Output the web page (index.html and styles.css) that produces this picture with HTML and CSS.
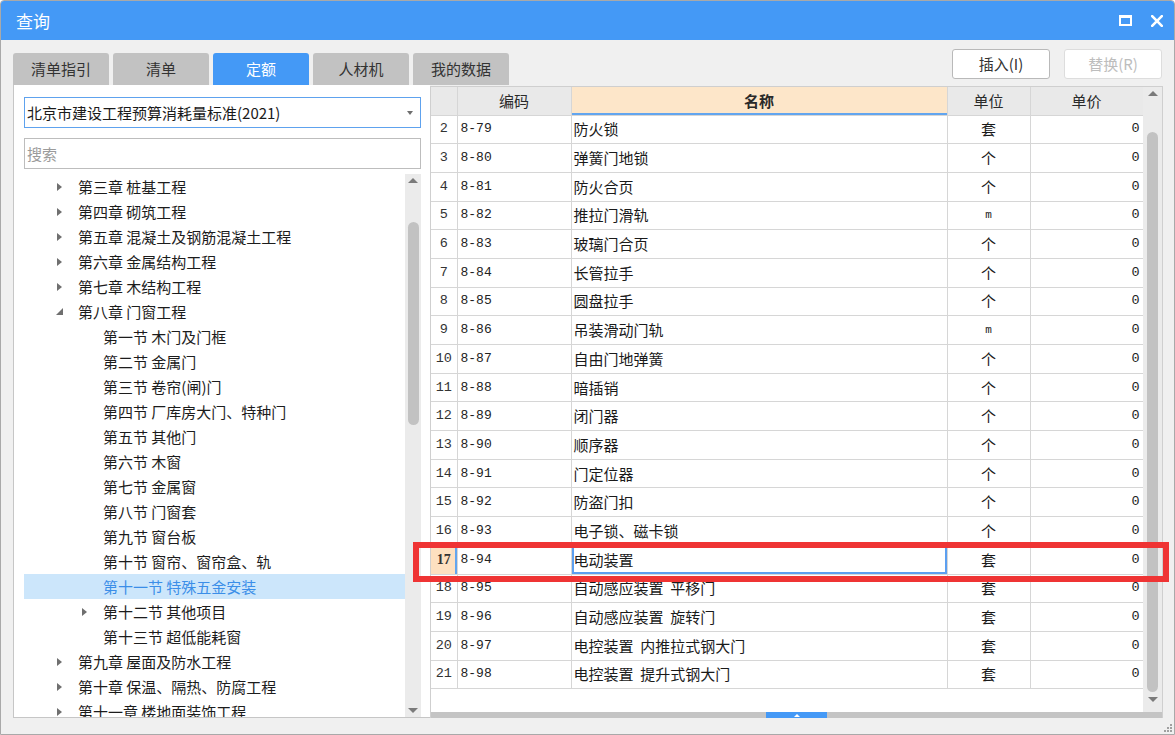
FILE: index.html
```html
<!DOCTYPE html>
<html lang="zh-CN">
<head>
<meta charset="utf-8">
<title>查询</title>
<link rel="stylesheet" href="styles.css">
</head>
<body>
<div class="window">
  <div class="titlebar">
    <span class="title">查询</span>
    <div class="tb-icons">
      <svg class="ic-max" width="13" height="11" viewBox="0 0 13 11"><rect x="1" y="1.5" width="11" height="8.5" fill="none" stroke="#fff" stroke-width="2"/><rect x="0" y="0" width="13" height="3" fill="#fff"/></svg>
      <svg class="ic-close" width="12" height="12" viewBox="0 0 12 12"><path d="M1.2 1.2 L10.8 10.8 M10.8 1.2 L1.2 10.8" stroke="#fff" stroke-width="2.6" stroke-linecap="square"/></svg>
    </div>
  </div>

  <div class="toprow">
    <div class="tabs">
      <div class="tab">清单指引</div>
      <div class="tab">清单</div>
      <div class="tab active">定额</div>
      <div class="tab">人材机</div>
      <div class="tab">我的数据</div>
    </div>
    <div class="buttons">
      <div class="btn">插入(I)</div>
      <div class="btn disabled">替换(R)</div>
    </div>
  </div>

  <div class="main">
    <div class="left">
      <div class="combo"><span>北京市建设工程预算消耗量标准(2021)</span><span class="caret"></span></div>
      <div class="search">搜索</div>
      <div class="tree">
        <div class="tree-list">
          <div class="node ch"><span class="tri"><i class="t-right"></i></span>第三章 桩基工程</div>
          <div class="node ch"><span class="tri"><i class="t-right"></i></span>第四章 砌筑工程</div>
          <div class="node ch"><span class="tri"><i class="t-right"></i></span>第五章 混凝土及钢筋混凝土工程</div>
          <div class="node ch"><span class="tri"><i class="t-right"></i></span>第六章 金属结构工程</div>
          <div class="node ch"><span class="tri"><i class="t-right"></i></span>第七章 木结构工程</div>
          <div class="node ch"><span class="tri"><svg class="t-open" width="7" height="7" viewBox="0 0 7 7"><path d="M7 0 L7 7 L0 7 Z" fill="#6f6f6f"/></svg></span>第八章 门窗工程</div>
          <div class="node sec"><span class="tri"></span>第一节 木门及门框</div>
          <div class="node sec"><span class="tri"></span>第二节 金属门</div>
          <div class="node sec"><span class="tri"></span>第三节 卷帘(闸)门</div>
          <div class="node sec"><span class="tri"></span>第四节 厂库房大门、特种门</div>
          <div class="node sec"><span class="tri"></span>第五节 其他门</div>
          <div class="node sec"><span class="tri"></span>第六节 木窗</div>
          <div class="node sec"><span class="tri"></span>第七节 金属窗</div>
          <div class="node sec"><span class="tri"></span>第八节 门窗套</div>
          <div class="node sec"><span class="tri"></span>第九节 窗台板</div>
          <div class="node sec"><span class="tri"></span>第十节 窗帘、窗帘盒、轨</div>
          <div class="node sec selected"><span class="tri"></span>第十一节 特殊五金安装</div>
          <div class="node sec"><span class="tri"><i class="t-right"></i></span>第十二节 其他项目</div>
          <div class="node sec"><span class="tri"></span>第十三节 超低能耗窗</div>
          <div class="node ch"><span class="tri"><i class="t-right"></i></span>第九章 屋面及防水工程</div>
          <div class="node ch"><span class="tri"><i class="t-right"></i></span>第十章 保温、隔热、防腐工程</div>
          <div class="node ch"><span class="tri"><i class="t-right"></i></span>第十一章 楼地面装饰工程</div>
        </div>
        <div class="vscroll small">
          <span class="arr-up"></span>
          <span class="thumb"></span>
          <span class="spacer"></span>
          <span class="arr-down"></span>
        </div>
      </div>
    </div>

    <div class="right">
      <div class="grid-area">
        <div class="table-wrap">
          <table class="grid">
            <colgroup>
              <col class="c-no"><col class="c-code"><col class="c-name"><col class="c-unit"><col class="c-price">
            </colgroup>
            <thead>
              <tr><th class="no"></th><th>编码</th><th class="name-h">名称</th><th>单位</th><th>单价</th></tr>
            </thead>
            <tbody>
              <tr><td class="no">2</td><td class="code">8-79</td><td class="name">防火锁</td><td class="unit">套</td><td class="price">0</td></tr>
              <tr><td class="no">3</td><td class="code">8-80</td><td class="name">弹簧门地锁</td><td class="unit">个</td><td class="price">0</td></tr>
              <tr><td class="no">4</td><td class="code">8-81</td><td class="name">防火合页</td><td class="unit">个</td><td class="price">0</td></tr>
              <tr><td class="no">5</td><td class="code">8-82</td><td class="name">推拉门滑轨</td><td class="unit m">m</td><td class="price">0</td></tr>
              <tr><td class="no">6</td><td class="code">8-83</td><td class="name">玻璃门合页</td><td class="unit">个</td><td class="price">0</td></tr>
              <tr><td class="no">7</td><td class="code">8-84</td><td class="name">长管拉手</td><td class="unit">个</td><td class="price">0</td></tr>
              <tr><td class="no">8</td><td class="code">8-85</td><td class="name">圆盘拉手</td><td class="unit">个</td><td class="price">0</td></tr>
              <tr><td class="no">9</td><td class="code">8-86</td><td class="name">吊装滑动门轨</td><td class="unit m">m</td><td class="price">0</td></tr>
              <tr><td class="no">10</td><td class="code">8-87</td><td class="name">自由门地弹簧</td><td class="unit">个</td><td class="price">0</td></tr>
              <tr><td class="no">11</td><td class="code">8-88</td><td class="name">暗插销</td><td class="unit">个</td><td class="price">0</td></tr>
              <tr><td class="no">12</td><td class="code">8-89</td><td class="name">闭门器</td><td class="unit">个</td><td class="price">0</td></tr>
              <tr><td class="no">13</td><td class="code">8-90</td><td class="name">顺序器</td><td class="unit">个</td><td class="price">0</td></tr>
              <tr><td class="no">14</td><td class="code">8-91</td><td class="name">门定位器</td><td class="unit">个</td><td class="price">0</td></tr>
              <tr><td class="no">15</td><td class="code">8-92</td><td class="name">防盗门扣</td><td class="unit">个</td><td class="price">0</td></tr>
              <tr><td class="no">16</td><td class="code">8-93</td><td class="name">电子锁、磁卡锁</td><td class="unit">个</td><td class="price">0</td></tr>
              <tr class="cur"><td class="no">17</td><td class="code">8-94</td><td class="name sel">电动装置</td><td class="unit">套</td><td class="price">0</td></tr>
              <tr><td class="no">18</td><td class="code">8-95</td><td class="name">自动感应装置&nbsp; 平移门</td><td class="unit">套</td><td class="price">0</td></tr>
              <tr><td class="no">19</td><td class="code">8-96</td><td class="name">自动感应装置&nbsp; 旋转门</td><td class="unit">套</td><td class="price">0</td></tr>
              <tr><td class="no">20</td><td class="code">8-97</td><td class="name">电控装置&nbsp; 内推拉式钢大门</td><td class="unit">套</td><td class="price">0</td></tr>
              <tr><td class="no">21</td><td class="code">8-98</td><td class="name">电控装置&nbsp; 提升式钢大门</td><td class="unit">套</td><td class="price">0</td></tr>
            </tbody>
          </table>
        </div>
        <div class="vscroll big">
          <span class="arr-up"></span>
          <span class="thumb"></span>
          <span class="spacer"></span>
          <span class="arr-down"></span>
        </div>
      </div>
      <div class="splitter"><span class="handle"><i class="h-up"></i></span></div>
    </div>
  </div>

  <div class="redbox"></div>
  <svg class="grip" width="10" height="10" viewBox="0 0 10 10">
    <rect x="8" y="2" width="2" height="2" fill="#a0a0a0"/>
    <rect x="5" y="5" width="2" height="2" fill="#a0a0a0"/><rect x="8" y="5" width="2" height="2" fill="#a0a0a0"/>
    <rect x="2" y="8" width="2" height="2" fill="#a0a0a0"/><rect x="5" y="8" width="2" height="2" fill="#a0a0a0"/><rect x="8" y="8" width="2" height="2" fill="#a0a0a0"/>
  </svg>
</div>
</body>
</html>
```

FILE: styles.css
```css
* { box-sizing: border-box; }
html, body { margin: 0; padding: 0; background: #ffffff; }
body {
  font-family: "Noto Sans CJK SC", "Microsoft YaHei", sans-serif;
  font-size: 15px;
  color: #1e1e1e;
}

.window {
  position: relative;
  width: 1175px;
  height: 735px;
  border: 1px solid #a9a9a9;
  border-radius: 4px 4px 0 0;
  background: #f0f0f0;
  display: flex;
  flex-direction: column;
  overflow: hidden;
}

/* title bar */
.titlebar {
  height: 39px;
  flex: none;
  background: #4499f6;
  color: #fff;
  display: flex;
  align-items: center;
  justify-content: space-between;
  padding: 0 11px 0 15px;
}
.title { font-size: 17px; line-height: 39px; }
.tb-icons { display: flex; align-items: center; gap: 19px; }
.tb-icons svg { display: block; }

/* tabs + buttons */
.toprow {
  height: 45px;
  flex: none;
  display: flex;
  justify-content: space-between;
  padding: 0 12px;
}
.tabs { align-self: flex-end; display: flex; gap: 4px; }
.tab {
  width: 96px;
  height: 32px;
  line-height: 32px;
  text-align: center;
  background: #c2c2c2;
  color: #333;
  border-radius: 3px 3px 0 0;
}
.tab.active { background: #4499f6; color: #fff; }

.buttons { display: flex; gap: 14px; margin-top: 9px; align-self: flex-start; }
.btn {
  width: 98px;
  height: 30px;
  line-height: 28px;
  text-align: center;
  background: #fff;
  border: 1px solid #b9b9b9;
  border-radius: 3px;
  color: #333;
}
.btn.disabled { border-color: #dddddd; color: #bdbdbd; }

/* main area */
.main {
  height: 633px;
  flex: none;
  display: flex;
  align-items: flex-start;
  padding: 0 11px 0 12px;
}

.left {
  width: 417px;
  height: 633px;
  flex: none;
  background: #fff;
  border-left: 1px solid #c6c6c6;
  border-bottom: 1px solid #c6c6c6;
  padding: 12px 9px 0 10px;
  display: flex;
  flex-direction: column;
}
.combo {
  height: 31px;
  flex: none;
  border: 1px solid #5ea2ee;
  display: flex;
  align-items: center;
  justify-content: space-between;
  padding: 0 7px 0 2px;
  color: #1a1a1a;
}
.caret {
  width: 0; height: 0;
  border-left: 3.5px solid transparent;
  border-right: 3.5px solid transparent;
  border-top: 4px solid #6e6e6e;
}
.search {
  margin-top: 10px;
  height: 31px;
  flex: none;
  border: 1px solid #bdbdbd;
  color: #9b9b9b;
  line-height: 29px;
  padding-left: 2px;
}
.tree {
  margin-top: 5px;
  flex: 1;
  min-height: 0;
  display: flex;
  overflow: hidden;
}
.tree-list { flex: 1; overflow: hidden; }
.node {
  height: 25px;
  display: flex;
  align-items: center;
  white-space: nowrap;
  color: #1c1c1c;
}
.node.ch { padding-left: 33px; }
.node.sec { padding-left: 58px; }
.node.selected { background: #cce6fb; color: #3b8ee8; }
.tri { width: 21px; flex: none; display: flex; align-items: center; height: 25px; }
.t-right {
  display: block;
  width: 0; height: 0;
  border-top: 4px solid transparent;
  border-bottom: 4px solid transparent;
  border-left: 5px solid #6f6f6f;
}
.t-open { display: block; margin-left: -1px; }

/* scrollbars */
.vscroll {
  flex: none;
  display: flex;
  flex-direction: column;
  align-items: center;
  background: #ebebeb;
}
.vscroll.small { width: 16px; }
.vscroll.big { width: 19px; }
.arr-up, .arr-down {
  display: block;
  width: 0; height: 0;
  border-left: 5px solid transparent;
  border-right: 5px solid transparent;
  flex: none;
}
.arr-up { border-bottom: 5px solid #7a7a7a; margin-top: 4px; }
.arr-down { border-top: 5px solid #7a7a7a; margin-bottom: 4px; }
.thumb { display: block; width: 11px; background: #c2c2c2; border-radius: 6px; flex: none; }
.spacer { flex: 1; }
.vscroll.small .thumb { margin-top: 39px; height: 203px; }
.vscroll.big .thumb { margin-top: 36px; height: 560px; }
.vscroll.big .arr-down { margin-bottom: 10px; }

/* right panel */
.right {
  width: 733px;
  height: 632px;
  margin-top: 1px;
  flex: none;
  background: #fff;
  border-top: 1px solid #cfcfcf;
  border-left: 1px solid #cfcfcf;
  border-right: 1px solid #cfcfcf;
  display: flex;
  flex-direction: column;
}
.grid-area { flex: 1; min-height: 0; display: flex; }
.table-wrap { flex: 1; overflow: hidden; }

.grid {
  width: 712px;
  border-collapse: collapse;
  table-layout: fixed;
}
.c-no { width: 26px; }
.c-code { width: 114px; }
.c-name { width: 376px; }
.c-unit { width: 83px; }
.c-price { width: 113px; }

.grid th, .grid td {
  border: 1px solid #d6d6d6;
  padding: 0;
  white-space: nowrap;
  overflow: hidden;
}
.grid tr > :first-child { border-left: none; }
.grid thead th { border-top: none; }
.grid th {
  height: 28px;
  background: #e9e9e9;
  font-weight: normal;
  color: #2a2a2a;
  text-align: center;
  line-height: 26px;
}
.grid th.name-h {
  background: #fde6c9;
  font-weight: bold;
  box-shadow: inset 0 -2px 0 #62a5ef;
}
.grid td { height: 28.7px; line-height: 26px; }
.grid td.no {
  font-family: "Liberation Mono", "DejaVu Sans Mono", monospace;
  font-size: 13.5px;
  text-align: center;
  color: #333;
}
.grid td.code {
  font-family: "Liberation Mono", "DejaVu Sans Mono", monospace;
  font-size: 13px;
  padding-left: 3px;
  color: #222;
}
.grid td.name { padding-left: 2px; color: #1a1a1a; }
.grid td.unit { text-align: center; color: #1a1a1a; }
.grid td.unit.m { font-family: "Liberation Mono", monospace; font-size: 11px; }
.grid td.price {
  text-align: right;
  padding-right: 3px;
  font-family: "Liberation Mono", "DejaVu Sans Mono", monospace;
  font-size: 13.5px;
  color: #222;
}
.grid tr.cur td.no {
  background: #fde0c0;
  font-weight: bold;
  font-family: "Liberation Serif", serif;
  font-size: 14px;
  box-shadow: inset -2px 0 0 #62a5ef;
}
.grid td.sel { box-shadow: inset 0 0 0 2px #5c9ff0; }

.splitter {
  height: 6px;
  flex: none;
  background: #c4c4c4;
  display: flex;
  justify-content: center;
}
.handle {
  width: 61px;
  height: 6px;
  background: #4499f6;
  display: flex;
  justify-content: center;
  align-items: center;
}
.h-up {
  display: block;
  width: 0; height: 0;
  border-left: 3px solid transparent;
  border-right: 3px solid transparent;
  border-bottom: 3px solid #fff;
}

/* overlays */
.redbox {
  position: absolute;
  left: 412px;
  top: 541px;
  width: 756px;
  height: 40px;
  border: 6px solid #ef3434;
}
.grip { position: absolute; right: 2px; bottom: 2px; }
```
